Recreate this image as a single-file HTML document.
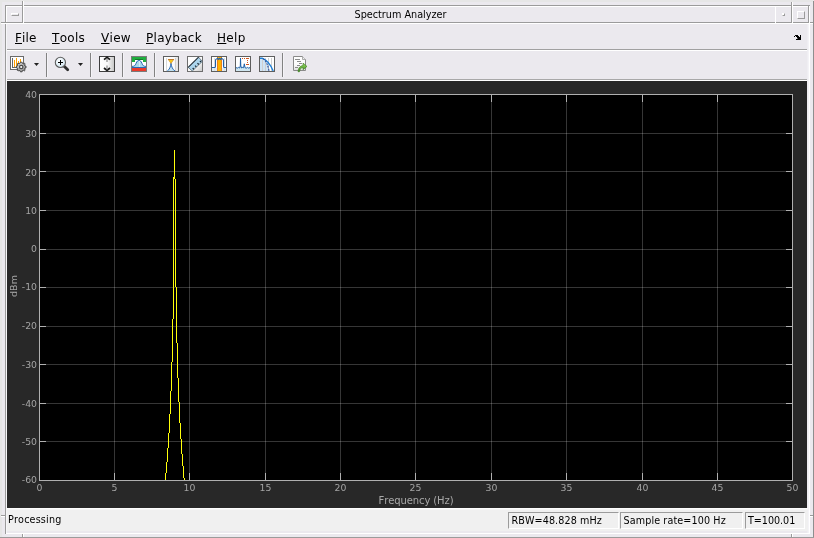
<!DOCTYPE html>
<html><head><meta charset="utf-8"><title>Spectrum Analyzer</title>
<style>
html,body{margin:0;padding:0;}
body{width:814px;height:538px;overflow:hidden;background:#e6e6e6;position:relative;font-family:"DejaVu Sans","Liberation Sans",sans-serif;color:#000;font-kerning:none;}
.a{position:absolute;}
.g{background:#9b9b9b;}
.w{background:#fff;}
#title{left:25px;top:7px;width:751px;height:15px;text-align:center;font-size:9.7px;line-height:15px;letter-spacing:-0.02px;}
.menu{top:30px;letter-spacing:0.3px;font-size:12px;line-height:16px;white-space:nowrap;}
.menu i{font-style:normal;text-decoration:underline;text-decoration-thickness:1px;text-underline-offset:1px;}
.st{font-size:9.6px;line-height:14px;white-space:nowrap;}
.gl{background:rgba(255,255,255,0.21);}
.tk{background:#b0b0b0;}
.y{background:#ffff0a;}
.yl{left:0;width:37px;text-align:right;font-size:9.3px;line-height:14px;color:#a4a4a4;}
.xl{width:41px;text-align:center;top:481px;font-size:9.3px;line-height:14px;color:#a4a4a4;}
.sep{width:1px;top:53px;height:24px;background:#828282;box-shadow:1px 0 0 #f4f3f7;}
.ic{top:56px;width:16px;height:16px;}
.box{border:1px solid #9b9b9b;border-right-color:#fff;border-bottom-color:#fff;box-sizing:border-box;top:512px;height:17px;}
#root{position:absolute;left:0;top:0;width:814px;height:538px;will-change:transform;}
</style></head><body><div id="root">
<!-- window frame -->
<div class="a" style="left:2px;top:2px;width:811px;height:535px;background:#ebe9ee"></div>
<div class="a" style="left:813px;top:1px;width:1px;height:537px;background:#8e8e8e"></div>
<div class="a" style="left:0;top:537px;width:814px;height:1px;background:#9b9b9b"></div>
<!-- inner bevel -->
<div class="a g" style="left:5px;top:5px;width:1px;height:529px"></div>
<div class="a g" style="left:5px;top:5px;width:805px;height:1px"></div>
<div class="a w" style="left:6px;top:6px;width:802px;height:1px"></div>
<div class="a w" style="left:6px;top:6px;width:1px;height:17px"></div>
<div class="a w" style="left:809px;top:6px;width:1px;height:528px"></div>
<div class="a w" style="left:6px;top:533px;width:804px;height:1px"></div>
<div class="a" style="left:808px;top:24px;width:1px;height:509px;background:#f4f3f7"></div>
<div class="a" style="left:807px;top:24px;width:1px;height:509px;background:#efeef2"></div>
<div class="a" style="left:6px;top:24px;width:1px;height:509px;background:#f6f6f8"></div>
<!-- title bar bottom -->
<div class="a g" style="left:5px;top:22px;width:804px;height:1px"></div>
<div class="a w" style="left:6px;top:23px;width:804px;height:1px"></div>
<!-- title buttons -->
<div class="a g" style="left:22px;top:1px;width:1px;height:22px"></div>
<div class="a w" style="left:23px;top:1px;width:1px;height:22px"></div>
<div class="a w" style="left:775px;top:6px;width:1px;height:18px"></div>
<div class="a g" style="left:791px;top:2px;width:1px;height:21px"></div>
<div class="a w" style="left:792px;top:2px;width:1px;height:21px"></div>
<div class="a g" style="left:808px;top:6px;width:1px;height:17px"></div>
<!-- resize handle ticks -->
<div class="a g" style="left:1px;top:22px;width:5px;height:1px"></div>
<div class="a w" style="left:1px;top:23px;width:5px;height:1px"></div>
<div class="a g" style="left:810px;top:22px;width:3px;height:1px"></div>
<div class="a w" style="left:810px;top:23px;width:3px;height:1px"></div>
<div class="a g" style="left:1px;top:515px;width:4px;height:1px"></div>
<div class="a w" style="left:1px;top:516px;width:4px;height:1px"></div>
<div class="a g" style="left:810px;top:515px;width:3px;height:1px"></div>
<div class="a w" style="left:810px;top:516px;width:3px;height:1px"></div>
<div class="a g" style="left:22px;top:534px;width:1px;height:3px"></div>
<div class="a w" style="left:23px;top:534px;width:1px;height:3px"></div>
<div class="a g" style="left:791px;top:534px;width:1px;height:3px"></div>
<div class="a w" style="left:792px;top:534px;width:1px;height:3px"></div>
<!-- window menu button glyph -->
<div class="a" style="left:11px;top:13px;width:8px;height:3px;box-sizing:border-box;border:1px solid #fff;border-right-color:#9b9b9b;border-bottom-color:#9b9b9b"></div>
<!-- minimize glyph -->
<div class="a" style="left:782px;top:13px;width:3px;height:3px;background:#fff;box-sizing:border-box;border:1px solid #fff;border-right-color:#9b9b9b;border-bottom-color:#9b9b9b"></div>
<!-- maximize glyph -->
<div class="a" style="left:797px;top:11px;width:8px;height:8px;box-sizing:border-box;border:1px solid #fff;border-right-color:#9b9b9b;border-bottom-color:#9b9b9b"></div>
<div class="a" id="title">Spectrum Analyzer</div>
<!-- menu bar -->
<div class="a menu" style="left:15px;letter-spacing:0.1px"><i>F</i>ile</div>
<div class="a menu" style="left:52px"><i>T</i>ools</div>
<div class="a menu" style="left:101px"><i>V</i>iew</div>
<div class="a menu" style="left:146px"><i>P</i>layback</div>
<div class="a menu" style="left:217px"><i>H</i>elp</div>
<svg class="a" style="left:793px;top:33px" width="10" height="10" viewBox="0 0 10 10" shape-rendering="crispEdges" fill="#000"><rect x="2" y="2" width="3" height="1"/><rect x="7" y="2" width="1" height="1"/><rect x="1" y="3" width="1" height="1"/><rect x="3" y="3" width="3" height="1"/><rect x="7" y="3" width="1" height="1"/><rect x="4" y="4" width="4" height="1"/><rect x="5" y="5" width="3" height="1"/><rect x="3" y="6" width="5" height="1"/><rect x="4" y="5" width="1" height="1" fill="#666"/></svg>
<div class="a g" style="left:7px;top:49px;width:800px;height:1px;background:#a0a0a0"></div>
<div class="a w" style="left:7px;top:50px;width:800px;height:1px"></div>
<!-- toolbar -->
<div class="a sep" style="left:46px"></div>
<div class="a sep" style="left:90px"></div>
<div class="a sep" style="left:122px"></div>
<div class="a sep" style="left:154px"></div>
<div class="a sep" style="left:282px"></div>
<svg class="a" style="left:0;top:0" width="814" height="538" viewBox="0 0 814 538">
<defs>
<linearGradient id="gLR" x1="0" y1="0" x2="1" y2="0"><stop offset="0" stop-color="#fff"/><stop offset="0.55" stop-color="#f8f8f8"/><stop offset="1" stop-color="#c4c4c4"/></linearGradient>
<linearGradient id="gDiag" x1="0" y1="0" x2="1" y2="1"><stop offset="0" stop-color="#fff"/><stop offset="0.55" stop-color="#fafafa"/><stop offset="1" stop-color="#c8c8c8"/></linearGradient>
<linearGradient id="gGear" x1="0" y1="0" x2="1" y2="1"><stop offset="0" stop-color="#e6e6e6"/><stop offset="1" stop-color="#858585"/></linearGradient>
<radialGradient id="gLens" cx="0.4" cy="0.35" r="0.7"><stop offset="0" stop-color="#fff"/><stop offset="1" stop-color="#cfe6f2"/></radialGradient>
<linearGradient id="gArrow" x1="0" y1="0" x2="0" y2="1"><stop offset="0" stop-color="#9ada62"/><stop offset="1" stop-color="#3f8f22"/></linearGradient>
<linearGradient id="gL5" x1="0" y1="0" x2="1" y2="0"><stop offset="0" stop-color="#fff"/><stop offset="0.7" stop-color="#fbfbfb"/><stop offset="1" stop-color="#dcdcdc"/></linearGradient>
<linearGradient id="gPage" x1="0" y1="0" x2="0" y2="1"><stop offset="0" stop-color="#fff"/><stop offset="0.6" stop-color="#fbfbfb"/><stop offset="1" stop-color="#dedede"/></linearGradient>
</defs>
<!-- icon1: configuration -->
<g shape-rendering="crispEdges">
<rect x="10.5" y="56.5" width="13" height="13" fill="#fff" stroke="#6a6a6a"/>
<rect x="12" y="58" width="1" height="10" fill="#666"/><rect x="12" y="67" width="6" height="1" fill="#666"/>
<rect x="14" y="60" width="1" height="7" fill="#ffa000"/><rect x="16" y="58" width="1" height="9" fill="#ffa000"/><rect x="18" y="61" width="1" height="3" fill="#ffa000"/><rect x="20" y="59" width="1" height="4" fill="#ffa000"/>
</g>
<g transform="translate(21.2,67)">
<path id="gear" d="M-0.9,-4.8 L0.9,-4.8 L1.2,-3.6 L2.2,-3.1 L3.3,-3.8 L4.0,-3.0 L3.3,-2.0 L3.7,-1.0 L4.8,-0.9 L4.8,0.9 L3.7,1.1 L3.3,2.1 L4.0,3.1 L3.1,3.9 L2.1,3.3 L1.1,3.7 L0.9,4.8 L-0.9,4.8 L-1.1,3.7 L-2.1,3.3 L-3.1,3.9 L-4.0,3.1 L-3.3,2.1 L-3.7,1.1 L-4.8,0.9 L-4.8,-0.9 L-3.7,-1.0 L-3.3,-2.0 L-4.0,-3.0 L-3.3,-3.8 L-2.2,-3.1 L-1.2,-3.6 Z" fill="url(#gGear)" stroke="#3c3c3c" stroke-width="0.9" stroke-linejoin="round"/>
<circle r="1.7" fill="#fafafa" stroke="#4a4a4a" stroke-width="1.2"/>
</g>
<path d="M34,63 h5 l-2.5,3 z" fill="#222"/>
<!-- icon2: zoom -->
<path d="M64.4,66.4 L67.7,69.7" stroke="#2e2e2e" stroke-width="2.8" stroke-linecap="round"/>
<circle cx="60.4" cy="62.4" r="5.1" fill="url(#gLens)" stroke="#5e5e5e" stroke-width="1.1"/>
<g shape-rendering="crispEdges"><rect x="58" y="62" width="5" height="1" fill="#000"/><rect x="60" y="60" width="1" height="5" fill="#000"/></g>
<path d="M78,63 h5 l-2.5,3 z" fill="#222"/>
<!-- icon3: autoscale -->
<rect x="99.5" y="56.5" width="15" height="15" fill="url(#gLR)" stroke="#3e3e3e" shape-rendering="crispEdges"/>
<path d="M104,59.7 L107,57.4 L110,59.7" fill="none" stroke="#1a1a1a" stroke-width="1.7"/>
<path d="M107,58.5 V62" stroke="#8a8a8a" stroke-width="1.2"/>
<path d="M104,68 L107,70.5 L110,68" fill="none" stroke="#1a1a1a" stroke-width="1.7"/>
<path d="M107,65.5 V69.5" stroke="#8a8a8a" stroke-width="1.2"/>
<!-- icon4: spectral mask -->
<g shape-rendering="crispEdges">
<rect x="131" y="56" width="16" height="16" fill="#7a7a7a"/>
<rect x="132" y="57" width="14" height="14" fill="#fff"/>
<rect x="132" y="57" width="14" height="3" fill="#1fae3e"/>
<rect x="132" y="60" width="3" height="2" fill="#1fae3e"/><rect x="143" y="60" width="3" height="2" fill="#1fae3e"/>
<rect x="135" y="59" width="8" height="1" fill="#157a2a"/>
<rect x="132" y="68" width="14" height="3" fill="#ea3a2c"/>
</g>
<path d="M132,66.4 C134.5,66.4 135.2,65.5 136,63.5 C137,61 137.8,60.5 139,60.5 C140.2,60.5 141,61 142,63.5 C142.8,65.5 143.5,66.4 146,66.4 L146,68 L132,68 Z" fill="#a9d9ec"/>
<path d="M132,66.4 C134.5,66.4 135.2,65.5 136,63.5 C137,61 137.8,60.5 139,60.5 C140.2,60.5 141,61 142,63.5 C142.8,65.5 143.5,66.4 146,66.4" fill="none" stroke="#2a68b4" stroke-width="1"/><rect x="139" y="61" width="1" height="6" fill="#d4ecf6" shape-rendering="crispEdges"/>
<rect x="132" y="67" width="14" height="1" fill="#2a68b4" shape-rendering="crispEdges"/>
<!-- icon5: peak finder -->
<rect x="163.5" y="56.5" width="15" height="15" fill="url(#gL5)" stroke="#5e5e5e" shape-rendering="crispEdges"/>
<g shape-rendering="crispEdges"><rect x="166" y="58" width="1" height="13" fill="#d8d8d8"/><rect x="175" y="58" width="1" height="13" fill="#cfcfcf"/></g>
<path d="M171,63.5 C170.6,67 169.5,69.5 167.3,71 L175,71 C172.6,69.5 171.5,67 171,63.5 Z" fill="#bfe0f0"/>
<path d="M167.3,71 C169.5,69.5 170.6,67 171,63.2 C171.5,67 172.6,69.5 175,71" fill="none" stroke="#2b6cb8" stroke-width="1"/>
<path d="M168.4,59.6 H173.6 L171,63.4 Z" fill="#f9cf1a" stroke="#d08a20" stroke-width="0.7" stroke-linejoin="round"/><rect x="168" y="59" width="6" height="1" fill="#c47a2a" shape-rendering="crispEdges"/>
<!-- icon6: ruler -->
<rect x="187.5" y="56.5" width="15" height="15" fill="url(#gDiag)" stroke="#6e6e6e" shape-rendering="crispEdges"/>
<path d="M198.6,57.2 L202.3,61.4 L192.3,71 L188.2,67.4 Z" fill="#acd6ee" stroke="#4a5862" stroke-width="0.7" stroke-linejoin="round"/>
<path d="M193.9,69.3 l-1.2,-1.3 M196.3,66.9 l-1.2,-1.3 M198.7,64.5 l-1.2,-1.3 M201.1,62.1 l-1.2,-1.3" stroke="#1c2830" stroke-width="1.2"/><path d="M188.2,67.4 L198.6,57.2" stroke="#2e3a44" stroke-width="1.1"/>
<!-- icon7: channel measurements -->
<rect x="211.5" y="56.5" width="15" height="15" fill="#fff" stroke="#5e5e5e" shape-rendering="crispEdges"/>
<g shape-rendering="crispEdges">
<rect x="212" y="68" width="14" height="3" fill="#dcecf4"/>
<rect x="214" y="58" width="1" height="13" fill="#dedede"/><rect x="224" y="58" width="1" height="13" fill="#dedede"/>
<rect x="217" y="57" width="5" height="14" fill="#fdb300"/><rect x="217" y="57" width="1" height="14" fill="#e8801a"/><rect x="221" y="57" width="1" height="14" fill="#e8801a"/>
</g>
<path d="M212,67.5 H215 C215.5,67.5 215.5,67 215.5,66 L215.5,60.5 C215.5,59.5 216,59 216.6,59 L217.6,58.3 L218.6,59.4 L219.6,58.3 L220.6,59.4 L221.6,58.3 L222.4,59 C223,59 223.5,59.5 223.5,60.5 L223.5,66 C223.5,67 223.5,67.5 224,67.5 H226" fill="none" stroke="#1f5fa8" stroke-width="1.1"/>
<!-- icon8: distortion -->
<rect x="235.5" y="56.5" width="15" height="15" fill="#fff" stroke="#5e5e5e" shape-rendering="crispEdges"/>
<path d="M236,67.5 L237.2,68.2 L238.4,67.4 L239.6,68 L240.3,66 L240.5,58 L240.8,66 L241.6,68 L242.8,67.3 L243.6,67.8 L244.3,63.8 L245,67.6 L246.2,68.2 L247.4,67.4 L248.6,68.1 L250,67.6 L250,71 L236,71 Z" fill="#cfe6f0"/>
<path d="M236,67.5 L237.2,68.2 L238.4,67.4 L239.6,68 L240.3,66 L240.5,58 L240.8,66 L241.6,68 L242.8,67.3 L243.6,67.8 L244.3,63.8 L245,67.6 L246.2,68.2 L247.4,67.4 L248.6,68.1 L250,67.6" fill="none" stroke="#1f5fa8" stroke-width="1"/>
<g shape-rendering="crispEdges" fill="#d0541c">
<rect x="242" y="58" width="1" height="1"/><rect x="244" y="58" width="1" height="1"/><rect x="246" y="58" width="3" height="1"/>
<rect x="247" y="60" width="1" height="1"/><rect x="247" y="62" width="1" height="1"/><rect x="246" y="64" width="3" height="1"/>
</g>
<!-- icon9: CCDF -->
<rect x="259.5" y="56.5" width="15" height="15" fill="#fff" stroke="#5e5e5e" shape-rendering="crispEdges"/>
<path d="M260,58 H262.5 C266,59 268,63 269,71 L260,71 Z" fill="#cfe4f6"/>
<g shape-rendering="crispEdges" fill="#cfcfcf"><rect x="262" y="58" width="1" height="13"/><rect x="265" y="58" width="1" height="13"/><rect x="268" y="58" width="1" height="13"/><rect x="271" y="58" width="1" height="13"/></g>
<path d="M260,58.3 H262.5 C266,59.5 270.5,64.5 273.2,71" fill="none" stroke="#1c7ed6" stroke-width="1.4"/>
<path d="M263,58.6 C266,60.5 268,65 269,71" fill="none" stroke="#2a4f9a" stroke-width="1.1" stroke-dasharray="2,1"/>
<!-- icon10: generate script -->
<path d="M293.5,56.5 H302.5 L305.5,59.5 V70.5 H293.5 Z" fill="url(#gPage)" stroke="#8a8a8a" stroke-width="1"/>
<path d="M302.5,56.5 V59.5 H305.5" fill="#eee" stroke="#9a9a9a" stroke-width="0.8"/>
<g shape-rendering="crispEdges" fill="#8c8c8c"><rect x="295" y="59" width="5" height="1"/><rect x="297" y="61" width="4" height="1"/><rect x="299" y="63" width="3" height="1"/><rect x="297" y="65" width="3" height="1"/><rect x="295" y="67" width="3" height="1"/></g>
<path d="M298,71.7 C298.2,67.8 300.3,65.7 303,65.5 L303,63.1 L307,66.4 L303,69.7 L303,67.5 C301.2,67.6 299.9,68.9 299.5,71.7 Z" fill="url(#gArrow)" stroke="#3a7a1e" stroke-width="0.6" stroke-linejoin="round"/>
</svg>

<div class="a" style="left:7px;top:79px;width:800px;height:1px;background:#a8a8a8"></div>
<div class="a w" style="left:7px;top:80px;width:800px;height:1px"></div>
<!-- figure -->
<div class="a" style="left:7px;top:81px;width:800px;height:427px;background:#282828"></div>
<div class="a" style="left:39px;top:94px;width:754px;height:387px;background:#000;box-sizing:border-box;border:1px solid #b0b0b0"></div>
<div class="a gl" style="left:114px;top:95px;width:1px;height:385px"></div>
<div class="a tk" style="left:114px;top:95px;width:1px;height:7px"></div>
<div class="a tk" style="left:114px;top:473px;width:1px;height:7px"></div>
<div class="a gl" style="left:189px;top:95px;width:1px;height:385px"></div>
<div class="a tk" style="left:189px;top:95px;width:1px;height:7px"></div>
<div class="a tk" style="left:189px;top:473px;width:1px;height:7px"></div>
<div class="a gl" style="left:265px;top:95px;width:1px;height:385px"></div>
<div class="a tk" style="left:265px;top:95px;width:1px;height:7px"></div>
<div class="a tk" style="left:265px;top:473px;width:1px;height:7px"></div>
<div class="a gl" style="left:340px;top:95px;width:1px;height:385px"></div>
<div class="a tk" style="left:340px;top:95px;width:1px;height:7px"></div>
<div class="a tk" style="left:340px;top:473px;width:1px;height:7px"></div>
<div class="a gl" style="left:415px;top:95px;width:1px;height:385px"></div>
<div class="a tk" style="left:415px;top:95px;width:1px;height:7px"></div>
<div class="a tk" style="left:415px;top:473px;width:1px;height:7px"></div>
<div class="a gl" style="left:491px;top:95px;width:1px;height:385px"></div>
<div class="a tk" style="left:491px;top:95px;width:1px;height:7px"></div>
<div class="a tk" style="left:491px;top:473px;width:1px;height:7px"></div>
<div class="a gl" style="left:566px;top:95px;width:1px;height:385px"></div>
<div class="a tk" style="left:566px;top:95px;width:1px;height:7px"></div>
<div class="a tk" style="left:566px;top:473px;width:1px;height:7px"></div>
<div class="a gl" style="left:642px;top:95px;width:1px;height:385px"></div>
<div class="a tk" style="left:642px;top:95px;width:1px;height:7px"></div>
<div class="a tk" style="left:642px;top:473px;width:1px;height:7px"></div>
<div class="a gl" style="left:717px;top:95px;width:1px;height:385px"></div>
<div class="a tk" style="left:717px;top:95px;width:1px;height:7px"></div>
<div class="a tk" style="left:717px;top:473px;width:1px;height:7px"></div>
<div class="a gl" style="left:40px;top:133px;width:752px;height:1px"></div>
<div class="a tk" style="left:40px;top:133px;width:6px;height:1px"></div>
<div class="a tk" style="left:786px;top:133px;width:6px;height:1px"></div>
<div class="a gl" style="left:40px;top:171px;width:752px;height:1px"></div>
<div class="a tk" style="left:40px;top:171px;width:6px;height:1px"></div>
<div class="a tk" style="left:786px;top:171px;width:6px;height:1px"></div>
<div class="a gl" style="left:40px;top:210px;width:752px;height:1px"></div>
<div class="a tk" style="left:40px;top:210px;width:6px;height:1px"></div>
<div class="a tk" style="left:786px;top:210px;width:6px;height:1px"></div>
<div class="a gl" style="left:40px;top:249px;width:752px;height:1px"></div>
<div class="a tk" style="left:40px;top:249px;width:6px;height:1px"></div>
<div class="a tk" style="left:786px;top:249px;width:6px;height:1px"></div>
<div class="a gl" style="left:40px;top:287px;width:752px;height:1px"></div>
<div class="a tk" style="left:40px;top:287px;width:6px;height:1px"></div>
<div class="a tk" style="left:786px;top:287px;width:6px;height:1px"></div>
<div class="a gl" style="left:40px;top:326px;width:752px;height:1px"></div>
<div class="a tk" style="left:40px;top:326px;width:6px;height:1px"></div>
<div class="a tk" style="left:786px;top:326px;width:6px;height:1px"></div>
<div class="a gl" style="left:40px;top:364px;width:752px;height:1px"></div>
<div class="a tk" style="left:40px;top:364px;width:6px;height:1px"></div>
<div class="a tk" style="left:786px;top:364px;width:6px;height:1px"></div>
<div class="a gl" style="left:40px;top:403px;width:752px;height:1px"></div>
<div class="a tk" style="left:40px;top:403px;width:6px;height:1px"></div>
<div class="a tk" style="left:786px;top:403px;width:6px;height:1px"></div>
<div class="a gl" style="left:40px;top:441px;width:752px;height:1px"></div>
<div class="a tk" style="left:40px;top:441px;width:6px;height:1px"></div>
<div class="a tk" style="left:786px;top:441px;width:6px;height:1px"></div>
<div class="a yl" style="top:88px">40</div>
<div class="a yl" style="top:127px">30</div>
<div class="a yl" style="top:166px">20</div>
<div class="a yl" style="top:204px">10</div>
<div class="a yl" style="top:242px">0</div>
<div class="a yl" style="top:280px">-10</div>
<div class="a yl" style="top:319px">-20</div>
<div class="a yl" style="top:358px">-30</div>
<div class="a yl" style="top:397px">-40</div>
<div class="a yl" style="top:435px">-50</div>
<div class="a yl" style="top:473px">-60</div>
<div class="a xl" style="left:19px">0</div>
<div class="a xl" style="left:94px">5</div>
<div class="a xl" style="left:169px">10</div>
<div class="a xl" style="left:245px">15</div>
<div class="a xl" style="left:320px">20</div>
<div class="a xl" style="left:395px">25</div>
<div class="a xl" style="left:471px">30</div>
<div class="a xl" style="left:546px">35</div>
<div class="a xl" style="left:622px">40</div>
<div class="a xl" style="left:697px">45</div>
<div class="a xl" style="left:772px">50</div>
<div class="a y" style="left:174px;top:150px;width:1px;height:29px"></div>
<div class="a y" style="left:173px;top:177px;width:1px;height:142px"></div>
<div class="a y" style="left:172px;top:319px;width:1px;height:43px"></div>
<div class="a y" style="left:171px;top:362px;width:1px;height:29px"></div>
<div class="a y" style="left:170px;top:391px;width:1px;height:23px"></div>
<div class="a y" style="left:169px;top:414px;width:1px;height:19px"></div>
<div class="a y" style="left:168px;top:433px;width:1px;height:15px"></div>
<div class="a y" style="left:167px;top:448px;width:1px;height:14px"></div>
<div class="a y" style="left:166px;top:462px;width:1px;height:11px"></div>
<div class="a y" style="left:165px;top:473px;width:1px;height:7px"></div>
<div class="a y" style="left:175px;top:179px;width:1px;height:108px"></div>
<div class="a y" style="left:176px;top:287px;width:1px;height:56px"></div>
<div class="a y" style="left:177px;top:343px;width:1px;height:35px"></div>
<div class="a y" style="left:178px;top:378px;width:1px;height:24px"></div>
<div class="a y" style="left:179px;top:402px;width:1px;height:21px"></div>
<div class="a y" style="left:180px;top:423px;width:1px;height:16px"></div>
<div class="a y" style="left:181px;top:439px;width:1px;height:15px"></div>
<div class="a y" style="left:182px;top:454px;width:1px;height:12px"></div>
<div class="a y" style="left:183px;top:466px;width:1px;height:12px"></div>
<div class="a y" style="left:184px;top:478px;width:1px;height:2px"></div>
<div class="a" style="left:366px;top:494px;width:100px;text-align:center;font-size:10px;line-height:14px;color:#a8a8a8;letter-spacing:-0.1px">Frequency (Hz)</div>
<div class="a" style="left:-6px;top:279px;width:40px;height:14px;text-align:center;font-size:9.5px;line-height:14px;color:#a4a4a4;transform:rotate(-90deg);transform-origin:50% 50%">dBm</div>
<!-- status bar -->
<div class="a" style="left:7px;top:508px;width:801px;height:23px;background:#f0f0f0"></div>
<div class="a" style="left:7px;top:508px;width:801px;height:1px;background:#fdfdfd"></div>
<div class="a" style="left:7px;top:509px;width:801px;height:1px;background:#f6f6f6"></div>
<div class="a st" style="left:8px;top:513px;letter-spacing:0.18px">Processing</div>
<div class="a box" style="left:508px;width:111px"></div>
<div class="a box" style="left:620px;width:123px"></div>
<div class="a box" style="left:745px;width:60px"></div>
<div class="a st" style="left:511.5px;top:514px;letter-spacing:0.1px">RBW=48.828 mHz</div>
<div class="a st" style="left:623.5px;top:514px;letter-spacing:0.12px">Sample rate=100 Hz</div>
<div class="a st" style="left:748px;top:514px;letter-spacing:-0.03px">T=100.01</div>
</div></body></html>
